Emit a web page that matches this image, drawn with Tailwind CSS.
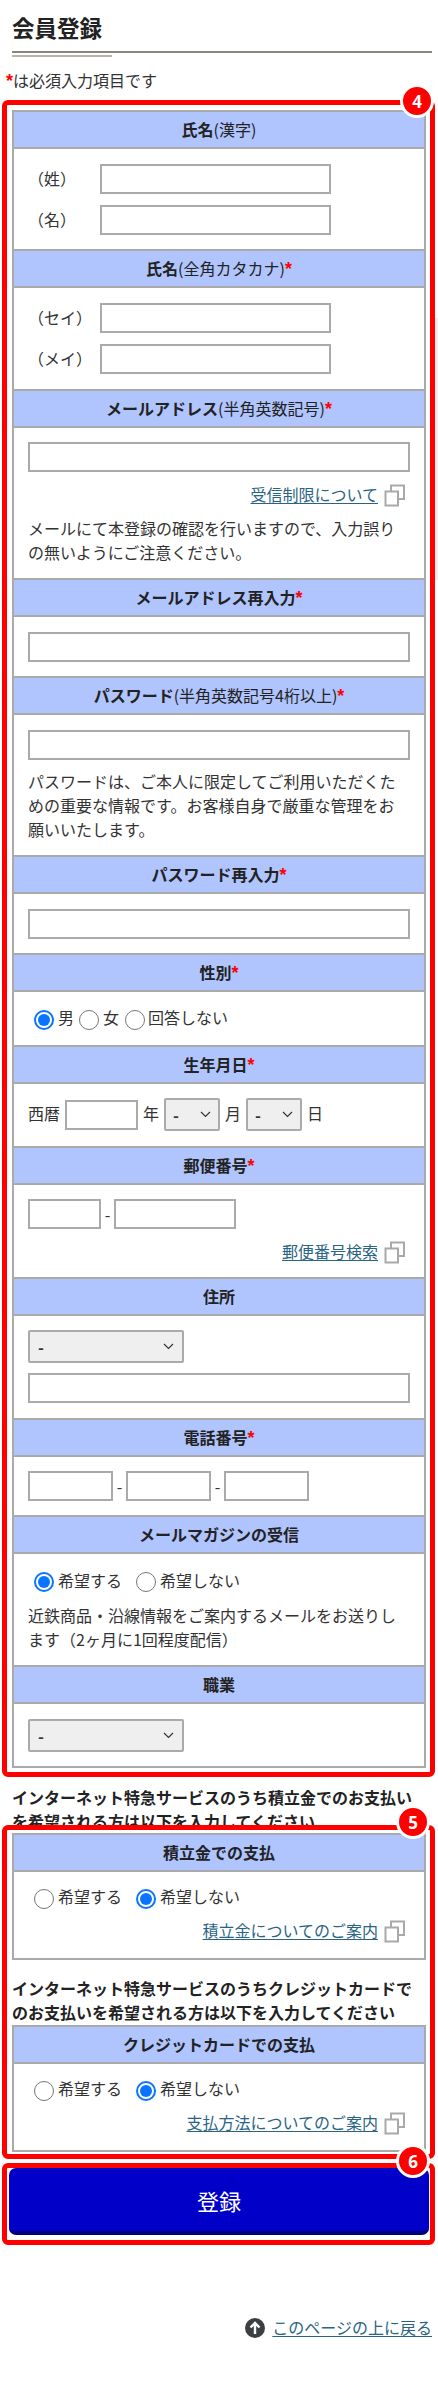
<!DOCTYPE html>
<html lang="ja">
<head>
<meta charset="utf-8">
<title>会員登録</title>
<script src="https://cdn.jsdelivr.net/npm/@tailwindcss/browser@4"></script>
</head>
<body class="bg-white">
<div class="relative w-[438px] h-[2387px] overflow-hidden bg-white text-[#333] text-base leading-6 font-['Noto_Sans_CJK_JP','Liberation_Sans',sans-serif]">

  <div class="px-3">
    <h1 class="pt-[10px] text-[22.5px] leading-[34px] font-bold text-[#222]">会員登録</h1>
    <div class="mt-[7px] h-[2px] w-[420px] bg-[#8b8975]"></div>
    <div class="mt-[2px] h-[2px] w-[100px] bg-[#b5b5ad]"></div>
  </div>
  <p class="mt-[11px] px-[6px]"><span class="text-[#f00] font-['Liberation_Sans'] text-[18px] font-bold leading-none">*</span>は必須入力項目です</p>

  <div class="mx-3 mt-[18px] border-x-2 border-b-2 border-[#aaa]">
    <div class="h-[39px] border-y-2 border-[#aaa] bg-[#b0c4fe] pb-[2px] flex items-center justify-center text-[#222]"><b>氏名</b>(漢字)</div>
    <div class="h-[100px] pt-[15px] pl-[14px] flex flex-col gap-[11px]">
      <div class="flex items-center"><span class="w-[72px] mb-[3px]">（姓）</span><input class="block w-[231px] h-[30px] border-2 border-[#aaa] bg-white"></div>
      <div class="flex items-center"><span class="w-[72px] mb-[3px]">（名）</span><input class="block w-[231px] h-[30px] border-2 border-[#aaa] bg-white"></div>
    </div>
    <div class="h-[39px] border-y-2 border-[#aaa] bg-[#b0c4fe] pb-[2px] flex items-center justify-center text-[#222]"><b>氏名</b>(全角カタカナ)<b class="text-[#f00] font-['Liberation_Sans'] text-[18px] pt-[3px]">*</b></div>
    <div class="h-[101px] pt-[15px] pl-[14px] flex flex-col gap-[11px]">
      <div class="flex items-center"><span class="w-[72px] mb-[3px]">（セイ）</span><input class="block w-[231px] h-[30px] border-2 border-[#aaa] bg-white"></div>
      <div class="flex items-center"><span class="w-[72px] mb-[3px]">（メイ）</span><input class="block w-[231px] h-[30px] border-2 border-[#aaa] bg-white"></div>
    </div>
    <div class="h-[39px] border-y-2 border-[#aaa] bg-[#b0c4fe] pb-[2px] flex items-center justify-center text-[#222]"><b>メールアドレス</b>(半角英数記号)<b class="text-[#f00] font-['Liberation_Sans'] text-[18px] pt-[3px]">*</b></div>
    <div class="h-[150px] pt-[14px] px-[14px]">
      <input class="block w-full h-[30px] border-2 border-[#aaa] bg-white">
      <div class="mt-[10px] pr-[5px] flex items-center justify-end gap-[6px]">
        <a class="mb-[2px] text-[#2a6485] underline underline-offset-2">受信制限について</a>
        <svg class="w-[21px] h-[23px]" viewBox="0 0 21 23" fill="none" stroke="#a9a9a9" stroke-width="2"><path d="M7 7V1.5H20V15H14"/><rect x="1.5" y="7.5" width="12.5" height="14"/></svg>
      </div>
      <p class="mt-[8px]">メールにて本登録の確認を行いますので、入力誤りの無いようにご注意ください。</p>
    </div>
    <div class="h-[39px] border-y-2 border-[#aaa] bg-[#b0c4fe] pb-[2px] flex items-center justify-center text-[#222]"><b>メールアドレス再入力</b><b class="text-[#f00] font-['Liberation_Sans'] text-[18px] pt-[3px]">*</b></div>
    <div class="h-[59px] pt-[15px] px-[14px]">
      <input class="block w-full h-[30px] border-2 border-[#aaa] bg-white">
    </div>
    <div class="h-[39px] border-y-2 border-[#aaa] bg-[#b0c4fe] pb-[2px] flex items-center justify-center text-[#222]"><b>パスワード</b>(半角英数記号4桁以上)<b class="text-[#f00] font-['Liberation_Sans'] text-[18px] pt-[3px]">*</b></div>
    <div class="h-[140px] pt-[15px] px-[14px]">
      <input class="block w-full h-[30px] border-2 border-[#aaa] bg-white">
      <p class="mt-[9px]">パスワードは、ご本人に限定してご利用いただくための重要な情報です。お客様自身で厳重な管理をお願いいたします。</p>
    </div>
    <div class="h-[39px] border-y-2 border-[#aaa] bg-[#b0c4fe] pb-[2px] flex items-center justify-center text-[#222]"><b>パスワード再入力</b><b class="text-[#f00] font-['Liberation_Sans'] text-[18px] pt-[3px]">*</b></div>
    <div class="h-[59px] pt-[15px] px-[14px]">
      <input class="block w-full h-[30px] border-2 border-[#aaa] bg-white">
    </div>
    <div class="h-[39px] border-y-2 border-[#aaa] bg-[#b0c4fe] pb-[2px] flex items-center justify-center text-[#222]"><b>性別</b><b class="text-[#f00] font-['Liberation_Sans'] text-[18px] pt-[3px]">*</b></div>
    <div class="h-[53px] pt-[18px] pl-[20px] flex items-start">
      <span class="w-5 h-5 rounded-full border-2 border-[#0a74ff] flex items-center justify-center"><span class="w-3 h-3 rounded-full bg-[#0a74ff]"></span></span>
      <span class="ml-[4px] -mt-[5px]">男</span>
      <span class="ml-[5px] w-5 h-5 rounded-full border-[1.5px] border-[#767676]"></span>
      <span class="ml-[4px] -mt-[5px]">女</span>
      <span class="ml-[6px] w-5 h-5 rounded-full border-[1.5px] border-[#767676]"></span>
      <span class="ml-[3px] -mt-[5px]">回答しない</span>
    </div>
    <div class="h-[39px] border-y-2 border-[#aaa] bg-[#b0c4fe] pb-[2px] flex items-center justify-center text-[#222]"><b>生年月日</b><b class="text-[#f00] font-['Liberation_Sans'] text-[18px] pt-[3px]">*</b></div>
    <div class="h-[62px] pl-[14px] pt-[14px] flex items-start">
      <span class="mt-[3px]">西暦</span>
      <input class="ml-[5px] mt-[2px] block w-[73px] h-[30px] border-2 border-[#aaa] bg-white">
      <span class="ml-[5px] mt-[3px]">年</span>
      <div class="relative ml-[5px] w-[56px] h-[33px]">
        <select class="block w-full h-full appearance-none border-2 border-[#aaa] bg-[#efefef] pl-[7px] rounded-[2px] font-bold"><option>-</option></select>
        <svg class="absolute right-[9px] top-[13px] w-[11px] h-[7px]" viewBox="0 0 11 7" fill="none" stroke="#333" stroke-width="1.2"><path d="M1 1l4.5 4.5L10 1"/></svg>
      </div>
      <span class="ml-[5px] mt-[3px]">月</span>
      <div class="relative ml-[5px] w-[56px] h-[33px]">
        <select class="block w-full h-full appearance-none border-2 border-[#aaa] bg-[#efefef] pl-[7px] rounded-[2px] font-bold"><option>-</option></select>
        <svg class="absolute right-[9px] top-[13px] w-[11px] h-[7px]" viewBox="0 0 11 7" fill="none" stroke="#333" stroke-width="1.2"><path d="M1 1l4.5 4.5L10 1"/></svg>
      </div>
      <span class="ml-[5px] mt-[3px]">日</span>
    </div>
    <div class="h-[39px] border-y-2 border-[#aaa] bg-[#b0c4fe] pb-[2px] flex items-center justify-center text-[#222]"><b>郵便番号</b><b class="text-[#f00] font-['Liberation_Sans'] text-[18px] pt-[3px]">*</b></div>
    <div class="h-[92px] pt-[14px] px-[14px]">
      <div class="flex items-center">
        <input class="block w-[73px] h-[30px] border-2 border-[#aaa] bg-white">
        <span class="w-[13px] text-center">-</span>
        <input class="block w-[122px] h-[30px] border-2 border-[#aaa] bg-white">
      </div>
      <div class="mt-[10px] pr-[5px] flex items-center justify-end gap-[6px]">
        <a class="mb-[2px] text-[#2a6485] underline underline-offset-2">郵便番号検索</a>
        <svg class="w-[21px] h-[23px]" viewBox="0 0 21 23" fill="none" stroke="#a9a9a9" stroke-width="2"><path d="M7 7V1.5H20V15H14"/><rect x="1.5" y="7.5" width="12.5" height="14"/></svg>
      </div>
    </div>
    <div class="h-[39px] border-y-2 border-[#aaa] bg-[#b0c4fe] pb-[2px] flex items-center justify-center text-[#222]"><b>住所</b></div>
    <div class="h-[102px] pt-[14px] px-[14px]">
      <div class="relative w-[156px] h-[33px]">
        <select class="block w-full h-full appearance-none border-2 border-[#aaa] bg-[#efefef] pl-[8px] rounded-[2px] font-bold"><option>-</option></select>
        <svg class="absolute right-[10px] top-[13px] w-[11px] h-[7px]" viewBox="0 0 11 7" fill="none" stroke="#333" stroke-width="1.2"><path d="M1 1l4.5 4.5L10 1"/></svg>
      </div>
      <input class="mt-[10px] block w-full h-[30px] border-2 border-[#aaa] bg-white">
    </div>
    <div class="h-[39px] border-y-2 border-[#aaa] bg-[#b0c4fe] pb-[2px] flex items-center justify-center text-[#222]"><b>電話番号</b><b class="text-[#f00] font-['Liberation_Sans'] text-[18px] pt-[3px]">*</b></div>
    <div class="h-[58px] pt-[14px] pl-[14px] flex items-start">
      <input class="block w-[85px] h-[30px] border-2 border-[#aaa] bg-white">
      <span class="w-[13px] text-center leading-[30px]">-</span>
      <input class="block w-[85px] h-[30px] border-2 border-[#aaa] bg-white">
      <span class="w-[13px] text-center leading-[30px]">-</span>
      <input class="block w-[85px] h-[30px] border-2 border-[#aaa] bg-white">
    </div>
    <div class="h-[39px] border-y-2 border-[#aaa] bg-[#b0c4fe] pb-[2px] flex items-center justify-center text-[#222]"><b>メールマガジンの受信</b></div>
    <div class="h-[111px] pt-[18px] px-[14px]">
      <div class="pl-[6px] flex items-start">
        <span class="w-5 h-5 rounded-full border-2 border-[#0a74ff] flex items-center justify-center"><span class="w-3 h-3 rounded-full bg-[#0a74ff]"></span></span>
        <span class="ml-[4px] -mt-[4px]">希望する</span>
        <span class="ml-[14px] w-5 h-5 rounded-full border-[1.5px] border-[#767676]"></span>
        <span class="ml-[4px] -mt-[4px]">希望しない</span>
      </div>
      <p class="mt-[11px]">近鉄商品・沿線情報をご案内するメールをお送りします（2ヶ月に1回程度配信）</p>
    </div>
    <div class="h-[39px] border-y-2 border-[#aaa] bg-[#b0c4fe] pb-[2px] flex items-center justify-center text-[#222]"><b>職業</b></div>
    <div class="h-[62px] pt-[15px] px-[14px]">
      <div class="relative w-[156px] h-[33px]">
        <select class="block w-full h-full appearance-none border-2 border-[#aaa] bg-[#efefef] pl-[8px] rounded-[2px] font-bold"><option>-</option></select>
        <svg class="absolute right-[10px] top-[13px] w-[11px] h-[7px]" viewBox="0 0 11 7" fill="none" stroke="#333" stroke-width="1.2"><path d="M1 1l4.5 4.5L10 1"/></svg>
      </div>
    </div>
  </div>

  <p class="mx-3 mt-[17px] font-bold text-[#222]">インターネット特急サービスのうち積立金でのお支払いを希望される方は以下を入力してください</p>

  <div class="mx-3 border-x-2 border-b-2 border-[#aaa]">
    <div class="h-[39px] border-y-2 border-[#aaa] bg-[#b0c4fe] pb-[2px] flex items-center justify-center text-[#222]"><b>積立金での支払</b></div>
    <div class="h-[86px] pt-[17px] px-[14px]">
      <div class="pl-[6px] flex items-start">
        <span class="w-5 h-5 rounded-full border-[1.5px] border-[#767676]"></span>
        <span class="ml-[4px] -mt-[5px]">希望する</span>
        <span class="ml-[14px] w-5 h-5 rounded-full border-2 border-[#0a74ff] flex items-center justify-center"><span class="w-3 h-3 rounded-full bg-[#0a74ff]"></span></span>
        <span class="ml-[4px] -mt-[5px]">希望しない</span>
      </div>
      <div class="mt-[9px] pr-[5px] flex items-center justify-end gap-[6px]">
        <a class="mb-[2px] text-[#2a6485] underline underline-offset-2">積立金についてのご案内</a>
        <svg class="w-[21px] h-[23px]" viewBox="0 0 21 23" fill="none" stroke="#a9a9a9" stroke-width="2"><path d="M7 7V1.5H20V15H14"/><rect x="1.5" y="7.5" width="12.5" height="14"/></svg>
      </div>
    </div>
  </div>

  <p class="mx-3 mt-[16px] font-bold text-[#222]">インターネット特急サービスのうちクレジットカードでのお支払いを希望される方は以下を入力してください</p>

  <div class="mx-3 mt-[1px] border-x-2 border-b-2 border-[#aaa]">
    <div class="h-[39px] border-y-2 border-[#aaa] bg-[#b0c4fe] pb-[2px] flex items-center justify-center text-[#222]"><b>クレジットカードでの支払</b></div>
    <div class="h-[86px] pt-[17px] px-[14px]">
      <div class="pl-[6px] flex items-start">
        <span class="w-5 h-5 rounded-full border-[1.5px] border-[#767676]"></span>
        <span class="ml-[4px] -mt-[5px]">希望する</span>
        <span class="ml-[14px] w-5 h-5 rounded-full border-2 border-[#0a74ff] flex items-center justify-center"><span class="w-3 h-3 rounded-full bg-[#0a74ff]"></span></span>
        <span class="ml-[4px] -mt-[5px]">希望しない</span>
      </div>
      <div class="mt-[9px] pr-[5px] flex items-center justify-end gap-[6px]">
        <a class="mb-[2px] text-[#2a6485] underline underline-offset-2">支払方法についてのご案内</a>
        <svg class="w-[21px] h-[23px]" viewBox="0 0 21 23" fill="none" stroke="#a9a9a9" stroke-width="2"><path d="M7 7V1.5H20V15H14"/><rect x="1.5" y="7.5" width="12.5" height="14"/></svg>
      </div>
    </div>
  </div>

  <button class="block mx-[9px] mt-[16px] w-[420px] h-[67px] rounded-[7px] bg-[#0000c8] border-b-[4px] border-[#00007e] text-white text-[22px] leading-none">登録</button>

  <div class="mt-[80px] pr-[6px] flex items-center justify-end gap-[7px]">
    <svg class="w-5 h-5" viewBox="0 0 20 20"><circle cx="10" cy="10" r="10" fill="#3d4043"/><path d="M10 16V5M5.5 9.5L10 5l4.5 4.5" fill="none" stroke="#fff" stroke-width="2.4"/></svg>
    <a class="mb-[2px] text-[#2a6485] underline underline-offset-2">このページの上に戻る</a>
  </div>

  <!-- annotation overlays -->
  <div class="absolute left-[435px] top-[318px] w-[3px] h-[262px] bg-[#eee]"></div>
  <div class="absolute left-[2px] top-[100px] w-[433px] h-[1677px] border-[5px] border-[#f00] rounded-[6px] pointer-events-none"></div>
  <div class="absolute left-[2px] top-[1825px] w-[433px] h-[334px] border-[5px] border-[#f00] rounded-[6px] pointer-events-none"></div>
  <div class="absolute left-[2px] top-[2163px] w-[433px] h-[82px] border-[5px] border-[#f00] rounded-[6px] pointer-events-none"></div>
  <div class="absolute left-[400px] top-[84px] w-[34px] h-[34px] rounded-full bg-[#f00] border-[3px] border-white flex items-center justify-center text-white font-bold text-[17px] leading-none font-['Open_Sans',sans-serif]">4</div>
  <div class="absolute left-[396px] top-[1805px] w-[34px] h-[34px] rounded-full bg-[#f00] border-[3px] border-white flex items-center justify-center text-white font-bold text-[17px] leading-none font-['Open_Sans',sans-serif]">5</div>
  <div class="absolute left-[396px] top-[2144px] w-[34px] h-[34px] rounded-full bg-[#f00] border-[3px] border-white flex items-center justify-center text-white font-bold text-[17px] leading-none font-['Open_Sans',sans-serif]">6</div>
</div>
</body>
</html>
